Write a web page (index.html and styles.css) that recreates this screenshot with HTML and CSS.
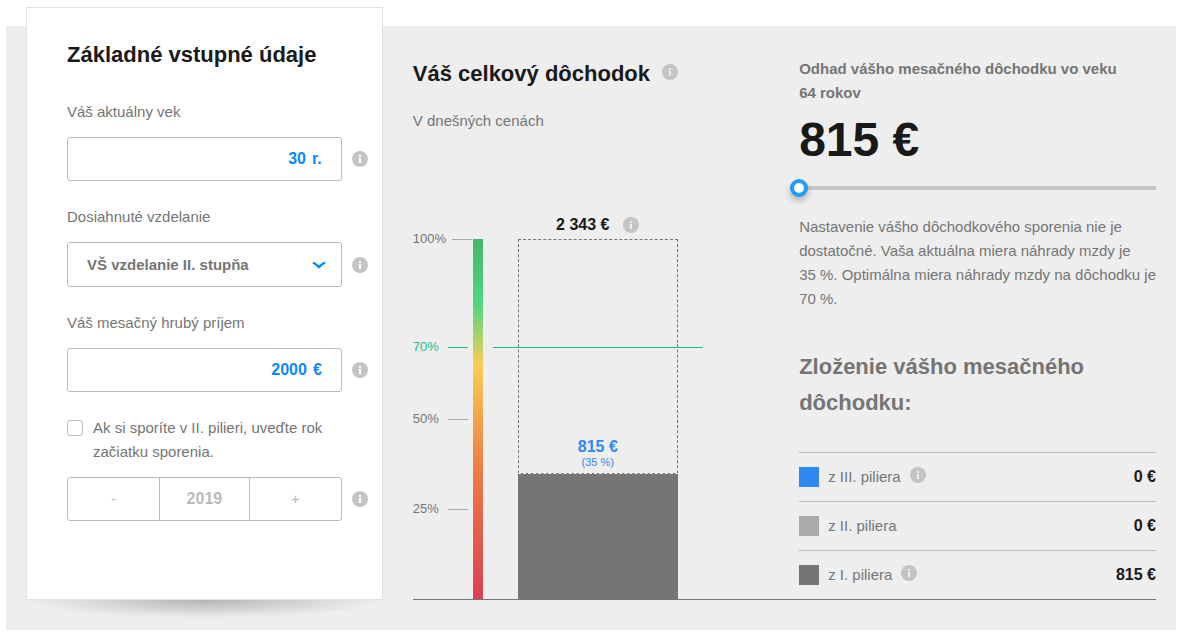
FILE: index.html
```html
<!DOCTYPE html>
<html lang="sk">

<head>
    <meta charset="UTF-8">
    <meta name="viewport" content="width=device-width, initial-scale=1.0">
    <title>Dôchodková kalkulačka</title>
    <link rel="stylesheet" href="styles.css">
</head>

<body>
    <!-- Ikona "i" pre všetky nápovedy -->
    <svg class="sprite" aria-hidden="true">
        <symbol id="icon-info" viewBox="0 0 16 16">
            <circle class="info-circle" cx="8" cy="8" r="8" />
            <path d="M7 4h2v2H7zM6.500 7H9v5H7V8h-.5z" />
        </symbol>
    </svg>

    <main class="calculator">
        <form class="card">
            <h2>Základné vstupné údaje</h2>

            <label class="label" for="age">Váš aktuálny vek</label>
            <div class="field">
                <div class="control">
                    <input type="text" id="age" value="30">
                    <span class="unit">r.</span>
                </div>
                <button type="button" class="info" aria-label="Info"><svg><use href="#icon-info" /></svg></button>
            </div>

            <label class="label" for="education">Dosiahnuté vzdelanie</label>
            <div class="field">
                <div class="control dropdown">
                    <select id="education">
                        <option>VŠ vzdelanie II. stupňa</option>
                    </select>
                    <svg class="arrow" viewBox="0 0 14 8" aria-hidden="true"><path d="M1 1.500Q4 3 7 6Q10 3 13 1.500" /></svg>
                </div>
                <button type="button" class="info" aria-label="Info"><svg><use href="#icon-info" /></svg></button>
            </div>

            <label class="label" for="income">Váš mesačný hrubý príjem</label>
            <div class="field">
                <div class="control">
                    <input type="text" id="income" value="2000">
                    <span class="unit">€</span>
                </div>
                <button type="button" class="info" aria-label="Info"><svg><use href="#icon-info" /></svg></button>
            </div>

            <div class="check">
                <input type="checkbox" id="second-pillar">
                <label for="second-pillar">Ak si sporíte v II. pilieri, uveďte rok začiatku sporenia.</label>
            </div>
            <div class="field">
                <div class="stepper">
                    <button type="button" disabled>-</button>
                    <input type="text" value="2019" aria-label="Rok začiatku sporenia" disabled>
                    <button type="button" disabled>+</button>
                </div>
                <button type="button" class="info" aria-label="Info"><svg><use href="#icon-info" /></svg></button>
            </div>
        </form>

        <div class="results">
            <section class="pension">
                <div class="title">
                    <h2>Váš celkový dôchodok</h2>
                    <button type="button" class="info raised" aria-label="Info"><svg><use href="#icon-info" /></svg></button>
                </div>
                <p>V dnešných cenách</p>

                <div class="chart">
                    <ul class="axis">
                        <li><span>100%</span></li>
                        <li class="optimal"><span>70%</span></li>
                        <li><span>50%</span></li>
                        <li><span>25%</span></li>
                    </ul>
                    <div class="scale"></div>
                    <div class="column">
                        <div class="total">
                            <strong>2 343 €</strong>
                            <button type="button" class="info" aria-label="Info"><svg><use href="#icon-info" /></svg></button>
                        </div>
                        <div class="bar">
                            <strong>815 €</strong>
                            <small>(35 %)</small>
                            <div class="fill" style="height: 35%"></div>
                        </div>
                    </div>
                    <div class="optimal-line"></div>
                </div>
            </section>

            <section class="summary">
                <label class="estimate" for="pension-range">Odhad vášho mesačného dôchodku vo veku 64&nbsp;rokov</label>
                <output class="amount" for="pension-range">815 €</output>
                <input type="range" id="pension-range" min="0" max="100" value="0">
                <p class="note">Nastavenie vášho dôchodkového sporenia nie je dostatočné. Vaša aktuálna miera náhrady mzdy je<br>35&nbsp;%.&nbsp;Optimálna&nbsp;miera&nbsp;náhrady&nbsp;mzdy&nbsp;na&nbsp;dôchodku&nbsp;je<br>70&nbsp;%.</p>

                <h3>Zloženie vášho mesačného dôchodku:</h3>
                <table>
                    <tbody>
                        <tr>
                            <th scope="row">
                                <div class="pillar">
                                    <span class="swatch third"></span>z III. piliera
                                    <button type="button" class="info raised" aria-label="Info"><svg><use href="#icon-info" /></svg></button>
                                </div>
                            </th>
                            <td>0 €</td>
                        </tr>
                        <tr>
                            <th scope="row">
                                <div class="pillar">
                                    <span class="swatch second"></span>z II. piliera
                                </div>
                            </th>
                            <td>0 €</td>
                        </tr>
                        <tr>
                            <th scope="row">
                                <div class="pillar">
                                    <span class="swatch first"></span>z I. piliera
                                    <button type="button" class="info raised" aria-label="Info"><svg><use href="#icon-info" /></svg></button>
                                </div>
                            </th>
                            <td>815 €</td>
                        </tr>
                    </tbody>
                </table>
            </section>
        </div>
    </main>
</body>

</html>
```
FILE: styles.css
```css
* {
    box-sizing: border-box;
}

body {
    margin: 0;
    background-color: #fff;
    color: #757575;
    font-family: "Liberation Sans", Arial, sans-serif;
    font-size: 15px;
    line-height: 24px;
}

h2,
h3,
p,
ul {
    margin: 0;
    padding: 0;
}

h2,
h3 {
    font-size: 22px;
    line-height: 36px;
}

h2,
strong {
    color: #191919;
}

strong {
    font-size: 16px;
}

button,
input,
select {
    margin: 0;
    padding: 0;
    border: none;
    background: none;
    color: inherit;
    font: inherit;
}

.sprite {
    display: none;
}

.calculator {
    display: grid;
    grid-template-columns: repeat(3, 1fr);
    gap: 30px;
    margin: 26px 5px 5px 6px;
    padding: 0 20px 30px;
    background-color: #eee;
}

/* Vstupné údaje */
.card {
    position: relative;
    margin-top: -19px;
    padding: 29px 14px 40px 40px;
    border: 1px solid #e0e0e0;
    background-color: #fff;
}

.card::after {
    content: "";
    position: absolute;
    top: calc(100% + 1px);
    left: 0;
    width: 100%;
    height: 18px;
    background: radial-gradient(ellipse 50% 100% at 50% 0, #b4b4b4, #eee);
}

.card h2 {
    margin-bottom: 27px;
}

.label {
    display: block;
    margin-bottom: 13px;
}

.field {
    display: flex;
    align-items: center;
    gap: 10px;
    margin-bottom: 24px;
}

.control {
    position: relative;
    display: flex;
    flex: 1;
    align-items: center;
    gap: 6px;
    height: 44px;
    padding: 0 19px;
    border: 1px solid #bababa;
    border-radius: 3px;
    color: #0a89fa;
    font-size: 16px;
    font-weight: bold;
}

.control input {
    flex: 1;
    min-width: 0;
    text-align: right;
}

.dropdown {
    height: 45px;
    font-size: 15px;
}

.control select {
    flex: 1;
    min-width: 0;
    color: #757575;
    appearance: none;
}

.arrow {
    position: absolute;
    right: 15px;
    width: 14px;
    height: 8px;
    fill: none;
    stroke: #0a89fa;
    stroke-width: 2.500;
    pointer-events: none;
}

.info {
    width: 16px;
    height: 16px;
    cursor: pointer;
}

.info svg {
    display: block;
    width: 16px;
    height: 16px;
    fill: #fff;
}

.results .info svg {
    fill: #eee;
}

.info-circle {
    fill: #c4c4c4;
}

.raised {
    margin-bottom: 5px;
}

.check {
    display: flex;
    gap: 10px;
    margin-bottom: 13px;
}

.check input {
    flex: none;
    width: 16px;
    height: 16px;
    margin-top: 4px;
    border: 1px solid #bababa;
    border-radius: 3px;
    appearance: none;
}

.check input:checked {
    background-color: #0a89fa;
}

.stepper {
    display: grid;
    flex: 1;
    grid-template-columns: repeat(3, 1fr);
    height: 44px;
    border: 1px solid #bababa;
    border-radius: 3px;
    color: #bababa;
}

.stepper input {
    min-width: 0;
    border: solid #bababa;
    border-width: 0 1px;
    font-size: 16px;
    font-weight: bold;
    text-align: center;
}

/* Výsledky */
.results {
    display: grid;
    grid-column: span 2;
    grid-template-columns: 1fr 1fr;
    gap: 30px;
    padding-top: 30px;
    border-bottom: 1px solid #757575;
}

.pension {
    display: flex;
    flex-direction: column;
}

.title {
    display: flex;
    align-items: center;
    gap: 12px;
    margin-bottom: 17px;
}

.chart {
    position: relative;
    display: flex;
    align-items: flex-end;
    width: 290px;
    height: 360px;
    margin-top: auto;
}

.axis {
    display: grid;
    grid-template-rows: 30fr 20fr 25fr 25fr;
    width: 60px;
    height: 100%;
    font-size: 13px;
    line-height: 16px;
    list-style: none;
}

.axis li {
    display: flex;
    align-items: center;
    align-self: start;
    gap: 6px;
    margin-top: -8px;
}

.axis span {
    min-width: 29px;
}

.axis li::after {
    content: "";
    width: 20px;
    height: 1px;
    background-color: #aaa;
}

.axis .optimal {
    color: #1cc08a;
}

.axis .optimal::after,
.optimal-line {
    background-color: #0cc08c;
}

.scale {
    width: 10px;
    height: 100%;
    background: linear-gradient(#45b56b, #52d681 18%, #f9cd55 35%, #ee7c43 64%, #d93f55);
}

.column {
    width: 160px;
    margin-left: 35px;
}

.total {
    display: flex;
    align-items: center;
    justify-content: center;
    gap: 14px;
    margin-bottom: 2px;
}

.bar {
    display: flex;
    flex-direction: column;
    justify-content: flex-end;
    height: 360px;
    border: 1px dashed #757575;
    border-bottom: none;
    text-align: center;
}

.bar strong,
.bar small {
    color: #2f88f3;
}

.bar strong {
    line-height: 16px;
}

.bar small {
    margin-bottom: 4px;
    font-size: 11px;
    line-height: 14px;
}

.fill {
    margin: 0 -1px;
    border-top: 1px dashed #eee;
    background-color: #757575;
}

/* Hranica optimálnej miery náhrady */
.optimal-line {
    position: absolute;
    top: 30%;
    right: 0;
    width: 210px;
    height: 1px;
}

.summary {
    padding-top: 1px;
}

.estimate {
    display: block;
    font-weight: bold;
}

.amount {
    display: block;
    margin: 8px 0 12px;
    color: #191919;
    font-size: 48px;
    font-weight: bold;
    line-height: 54px;
}

input[type="range"] {
    display: block;
    width: calc(100% + 9px);
    height: 18px;
    margin: 0 0 18px -9px;
    background: linear-gradient(#c4c4c4, #c4c4c4) center / 100% 4px no-repeat;
    appearance: none;
}

input[type="range"]::-webkit-slider-thumb {
    width: 18px;
    height: 18px;
    border: 4px solid #1f9cfd;
    border-radius: 50%;
    background-color: #fff;
    box-shadow: 0 4px 6px rgba(0, 0, 0, 0.25);
    appearance: none;
}

.note {
    margin-bottom: 38px;
}

h3 {
    margin-bottom: 31px;
}

table {
    width: 100%;
    border-collapse: separate;
    border-spacing: 0;
}

th,
td {
    height: 49px;
    padding: 0;
    border-top: 1px solid #bababa;
}

th {
    font-weight: normal;
    text-align: left;
}

td {
    color: #191919;
    font-size: 16px;
    font-weight: bold;
    text-align: right;
}

.pillar {
    display: flex;
    align-items: center;
    gap: 9px;
}

.swatch {
    width: 20px;
    height: 20px;
}

.third {
    background-color: #2f88f3;
}

.second {
    background-color: #aaa;
}

.first {
    background-color: #757575;
}
```
